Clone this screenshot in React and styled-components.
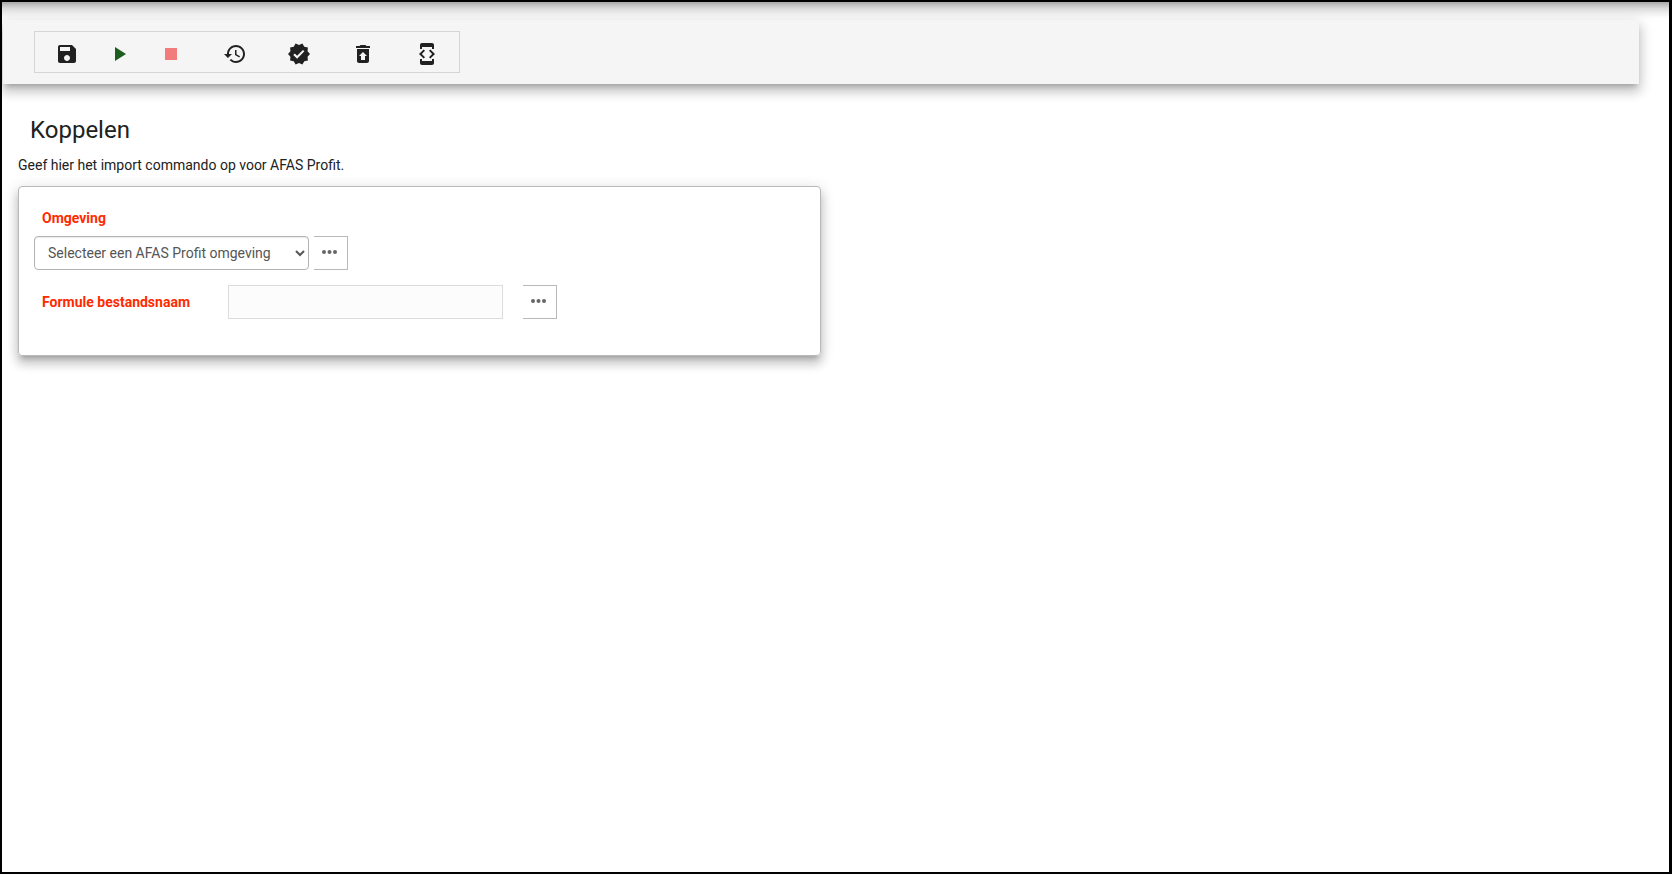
import React from "react";
import styled, { createGlobalStyle } from "styled-components";

const GlobalStyle = createGlobalStyle`
  *, *::before, *::after { box-sizing: border-box; }
  body {
    margin: 0;
    background: #fff;
    color: #212121;
    font-family: Roboto, "Liberation Sans", sans-serif;
    font-size: 14px;
    line-height: 20px;
  }
`;

const elevation = `
  box-shadow: 0 5px 5px -3px rgba(0, 0, 0, 0.2),
    0 8px 10px 1px rgba(0, 0, 0, 0.14),
    0 3px 14px 2px rgba(0, 0, 0, 0.12);
`;

const Frame = styled.div`
  min-height: 100vh;
  border: 2px solid #000;
  border-right-width: 3px;
  overflow: hidden;
`;

const TopEdge = styled.header`
  height: 20px;
  margin: -20px -20px 18px;
  background: #fff;
  ${elevation}
`;

const Toolbar = styled.div`
  margin: 0 30px 0 1px;
  padding: 11px 31px;
  display: flex;
  background: #f5f5f5;
  ${elevation}
`;

const ToolGroup = styled.div`
  display: flex;
  height: 42px;
  padding-top: 4px;
  border: 1px solid #d5d5d5;
`;

const ToolButton = styled.button`
  width: ${(p) => (p.$compact ? 40 : 64)}px;
  margin: 0 ${(p) => (p.$compact ? 12 : 0)}px 0 0;
  padding: 0;
  display: flex;
  align-items: center;
  justify-content: center;
  border: 0;
  background: transparent;
  color: ${(p) => p.$color || "#212121"};
  cursor: pointer;

  svg { width: 24px; height: 24px; fill: currentColor; }
`;

const Main = styled.main`
  width: 50%;
  padding: 30px 15px 0 16px;
`;

const Title = styled.h1`
  margin: 0 0 9px;
  padding-left: 12px;
  font-size: 24px;
  font-weight: 400;
  line-height: 32px;
`;

const Intro = styled.p`
  margin: 0 0 11px;
`;

const Card = styled.form`
  min-height: 170px;
  padding: 21px 15px;
  border: 1px solid #b9b9b9;
  border-radius: 4px;
  ${elevation}
`;

const Label = styled.label`
  width: ${(p) => (p.$inline ? "194px" : "auto")};
  margin-bottom: ${(p) => (p.$inline ? 0 : 8)}px;
  padding-left: 8px;
  display: block;
  color: #ff2a00;
  font-weight: 700;
`;

const Row = styled.div`
  display: flex;
  align-items: center;
  margin-bottom: 15px;
`;

const Select = styled.select`
  width: 275px;
  height: 34px;
  padding: 6px 4px 6px 9px;
  border: 1px solid #b3b3b3;
  border-radius: 4px;
  background: #fff;
  box-shadow: inset 0 1px 1px rgba(0, 0, 0, 0.08);
  color: #555;
  font: inherit;
`;

const TextInput = styled.input`
  width: 275px;
  height: 34px;
  padding: 6px 12px;
  border: 1px solid #dcdcdc;
  background: #fcfcfc;
  color: #555;
  font: inherit;
`;

const MoreButton = styled.button`
  width: 34px;
  height: 34px;
  margin-left: ${(p) => p.$gap}px;
  padding: 0 2px 2px 0;
  display: flex;
  align-items: center;
  justify-content: center;
  border: 1px solid #b9b9b9;
  border-left: 0;
  background: #fff;
  color: #666;
  cursor: pointer;

  svg { width: 17px; height: 18px; fill: currentColor; }
`;

const tools = [
  { label: "Opslaan", path: "M17 3H5c-1.11 0-2 .9-2 2v14c0 1.1.89 2 2 2h14c1.1 0 2-.9 2-2V7l-4-4zm-5 16c-1.66 0-3-1.34-3-3s1.34-3 3-3 3 1.34 3 3-1.34 3-3 3zm3-10H5V5h10v4z" },
  { label: "Starten", compact: true, color: "#1b5e20", path: "M8 5v14l11-7z" },
  { label: "Stoppen", compact: true, color: "#f27b7b", path: "M6 6h12v12H6z" },
  { label: "Geschiedenis", path: "M13 3c-4.97 0-9 4.03-9 9H1l3.89 3.89.07.14L9 12H6c0-3.87 3.13-7 7-7s7 3.13 7 7-3.13 7-7 7c-1.93 0-3.68-.79-4.94-2.06l-1.42 1.42C8.27 19.99 10.51 21 13 21c4.97 0 9-4.03 9-9s-4.03-9-9-9zm-1 5v5l4.28 2.54.72-1.21-3.5-2.08V8H12z" },
  { label: "Valideren", path: "M23 12l-2.44-2.79.34-3.69-3.61-.82-1.89-3.2L12 2.96 8.6 1.5 6.71 4.69 3.1 5.5l.34 3.7L1 12l2.44 2.79-.34 3.7 3.61.82L8.6 22.5l3.4-1.47 3.4 1.46 1.89-3.19 3.61-.82-.34-3.69L23 12zm-12.91 4.72l-3.8-3.81 1.48-1.48 2.32 2.33 5.85-5.87 1.48 1.48-7.33 7.35z" },
  { label: "Herstellen", path: "M19 4h-3.5l-1-1h-5l-1 1H5v2h14V4zM6 7v12c0 1.1.9 2 2 2h8c1.1 0 2-.9 2-2V7H6zm8 7v4h-4v-4H8l4-4 4 4h-2z" },
  { label: "Ontwikkelmodus", path: "M7 5h10v2h2V3c0-1.1-.9-1.99-2-1.99L7 1c-1.1 0-2 .9-2 2v4h2V5zm8.41 11.59L20 12l-4.59-4.59L14 8.83 17.17 12 14 15.17l1.41 1.42zM10 15.17L6.83 12 10 8.83 8.59 7.41 4 12l4.59 4.59L10 15.17zM17 19H7v-2H5v4c0 1.1.9 2 2 2h10c1.1 0 2-.9 2-2v-4h-2v2z" },
];

function More({ label, gap }) {
  return (
    <MoreButton type="button" aria-label={label} $gap={gap}>
      <svg viewBox="0 0 17 18" aria-hidden="true">
        <circle cx="3" cy="9" r="2" />
        <circle cx="8.5" cy="9" r="2" />
        <circle cx="14" cy="9" r="2" />
      </svg>
    </MoreButton>
  );
}

export default function App() {
  return (
    <>
      <GlobalStyle />
      <Frame>
        <TopEdge />
        <Toolbar>
          <ToolGroup role="toolbar">
            {tools.map((t) => (
              <ToolButton key={t.label} type="button" aria-label={t.label} $compact={t.compact} $color={t.color}>
                <svg viewBox="0 0 24 24" aria-hidden="true">
                  <path d={t.path} />
                </svg>
              </ToolButton>
            ))}
          </ToolGroup>
        </Toolbar>
        <Main>
          <Title>Koppelen</Title>
          <Intro>Geef hier het import commando op voor AFAS Profit.</Intro>
          <Card>
            <Label htmlFor="environment">Omgeving</Label>
            <Row>
              <Select id="environment">
                <option>Selecteer een AFAS Profit omgeving</option>
              </Select>
              <More label="Omgeving kiezen" gap={5} />
            </Row>
            <Row>
              <Label htmlFor="filename" $inline>Formule bestandsnaam</Label>
              <TextInput id="filename" type="text" />
              <More label="Bestand kiezen" gap={20} />
            </Row>
          </Card>
        </Main>
      </Frame>
    </>
  );
}
